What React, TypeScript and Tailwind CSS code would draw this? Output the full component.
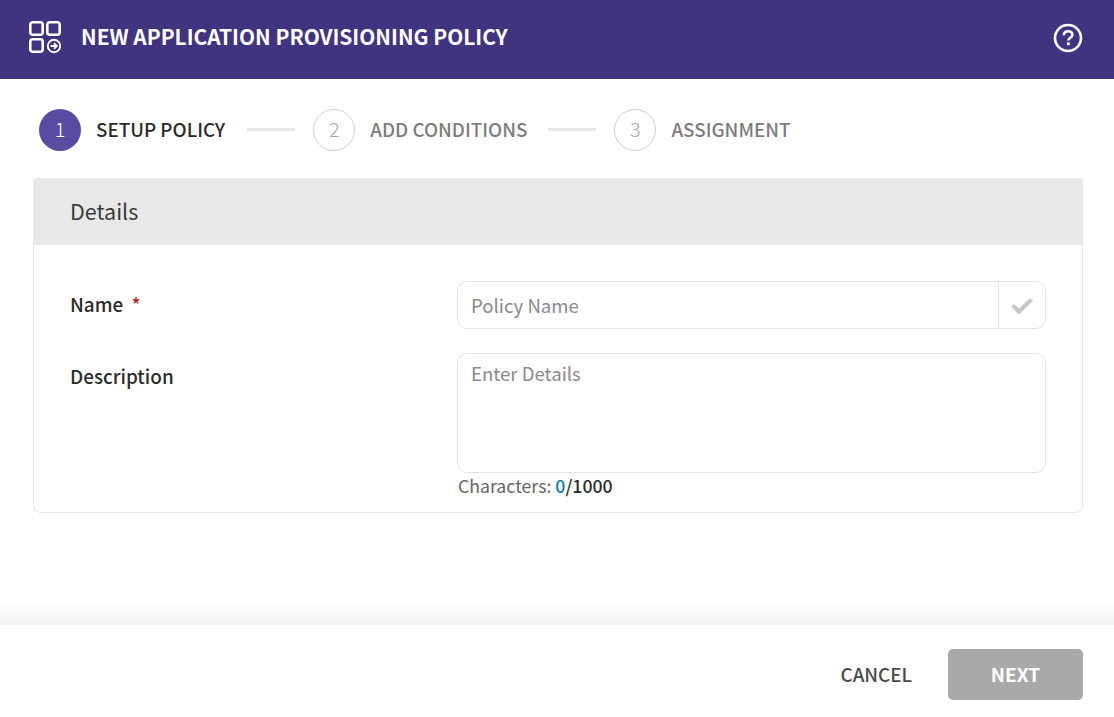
const font = { fontFamily: '"Noto Sans CJK SC", "Noto Sans", sans-serif' };

function AppsIcon() {
  return (
    <svg width="34" height="34" viewBox="0 0 34 34" fill="none" stroke="white" strokeWidth="2.6">
      <rect x="1.3" y="1.3" width="12.4" height="12.4" rx="2.5" />
      <rect x="18.3" y="1.3" width="12.4" height="12.4" rx="2.5" />
      <rect x="1.3" y="18.3" width="12.4" height="12.4" rx="2.5" />
      <circle cx="25" cy="25" r="6.2" strokeWidth="1.9" />
      <path d="M21.6 25h6M25 22.2l2.8 2.8-2.8 2.8" strokeWidth="1.8" />
    </svg>
  );
}

function Step({ n, label, active }: { n: number; label: string; active?: boolean }) {
  return (
    <div className="flex items-center gap-[15px]">
      <div
        className={
          active
            ? "w-[42px] h-[42px] rounded-full bg-[#584ca0] text-white flex items-center justify-center text-[20px] font-light pb-[3px]"
            : "w-[42px] h-[42px] rounded-full border border-[#cfcfcf] text-[#a6a6a6] flex items-center justify-center text-[20px] font-light pb-[3px]"
        }
      >
        {n}
      </div>
      <span className={active ? "text-[18.8px] font-medium text-[#2b2b2b] mb-[1px]" : "text-[18.8px] font-medium text-[#7d7d7d] mb-[1px]"}>
        {label}
      </span>
    </div>
  );
}

export default function App() {
  return (
    <div className="w-[1114px] h-[717px] bg-white flex flex-col overflow-hidden" style={font}>
      <header className="h-[79px] bg-[#40337f] flex items-center pl-[29px] pr-[31px] pb-[4px] text-white shrink-0">
        <AppsIcon />
        <h1 className="ml-[18px] text-[20.9px] font-bold leading-none mb-[2px]">NEW APPLICATION PROVISIONING POLICY</h1>
        <svg className="ml-auto" width="30" height="30" viewBox="0 0 30 30" fill="none" stroke="white">
          <circle cx="15" cy="15" r="13" strokeWidth="2.6" />
          <path d="M10.8 12.2c0-2.6 2-4 4.3-4 2.4 0 4.2 1.4 4.2 3.6 0 3-3.9 3-3.9 5.8" strokeWidth="2.6" />
          <rect x="13.9" y="19.4" width="2.8" height="2.8" fill="white" stroke="none" />
        </svg>
      </header>

      <div className="flex items-center pl-[39px] pt-[30px] h-[72px] shrink-0">
        <Step n={1} label="SETUP POLICY" active />
        <div className="w-[48px] h-[3px] bg-[#e8e8e8] mr-[18px] ml-[22px] mb-[2px]" />
        <Step n={2} label="ADD CONDITIONS" />
        <div className="w-[48px] h-[3px] bg-[#e8e8e8] mr-[18px] ml-[21px] mb-[2px]" />
        <Step n={3} label="ASSIGNMENT" />
      </div>

      <section className="ml-[33px] mr-[31px] mt-[27px] h-[335px] border border-[#e8e8e8] border-t-0 rounded-b-[8px] rounded-t-[3px] overflow-hidden shrink-0">
        <div className="h-[67px] bg-[#e8e8e8] flex items-center pl-[36px] text-[21.5px] text-[#3a3a3a]">Details</div>
        <div className="pl-[36px] pr-[36px] pt-[36px] flex flex-col">
          <div className="flex h-[48px]">
            <div className="w-[387px] text-[18.9px] font-medium text-[#2b2b2b] leading-[48px] -mt-[1px]">
              Name <span className="text-[#b3261e] ml-[4px]">*</span>
            </div>
            <div className="flex-1 flex border border-[#e4e4e4] rounded-[10px] items-stretch">
              <div className="flex-1 pl-[13px] text-[18.6px] text-[#8a8a8a] flex items-center">Policy Name</div>
              <div className="w-[47px] border-l border-[#e4e4e4] flex items-center justify-center">
                <svg width="24" height="20" viewBox="0 0 24 20" fill="none" stroke="#c8c8c8" strokeWidth="4.4">
                  <path d="M2.5 10.5l6.5 6L21.5 4.5" />
                </svg>
              </div>
            </div>
          </div>
          <div className="flex mt-[24px]">
            <div className="w-[387px] text-[18.9px] font-medium text-[#2b2b2b] leading-[48px] -mt-[1px]">Description</div>
            <div className="flex-1">
              <div className="h-[120px] border border-[#e4e4e4] rounded-[10px] pl-[13px] pt-[5px] text-[18.6px] text-[#8a8a8a]">Enter Details</div>
              <div className="-mt-[1px] text-[17.7px] leading-[26px] text-[#666666] pl-[1px]">
                Characters: <span className="font-medium text-[#0a7ea4]">0</span>
                <span className="font-medium text-[#2b2b2b]">/1000</span>
              </div>
            </div>
          </div>
        </div>
      </section>

      <div className="flex-1 relative">
        <div className="absolute left-0 right-0 bottom-0 h-[25px] bg-gradient-to-b from-white to-[#f3f3f3]" />
      </div>
      <footer className="h-[92px] shrink-0 flex items-start justify-end pr-[31px] pt-[24px]">
        <button className="text-[18.8px] font-medium text-[#4a4a4a] h-[51px] mr-[36px]">CANCEL</button>
        <button className="w-[135px] h-[51px] bg-[#a9a9a9] rounded-[5px] text-white text-[19px] font-bold">NEXT</button>
      </footer>
    </div>
  );
}
